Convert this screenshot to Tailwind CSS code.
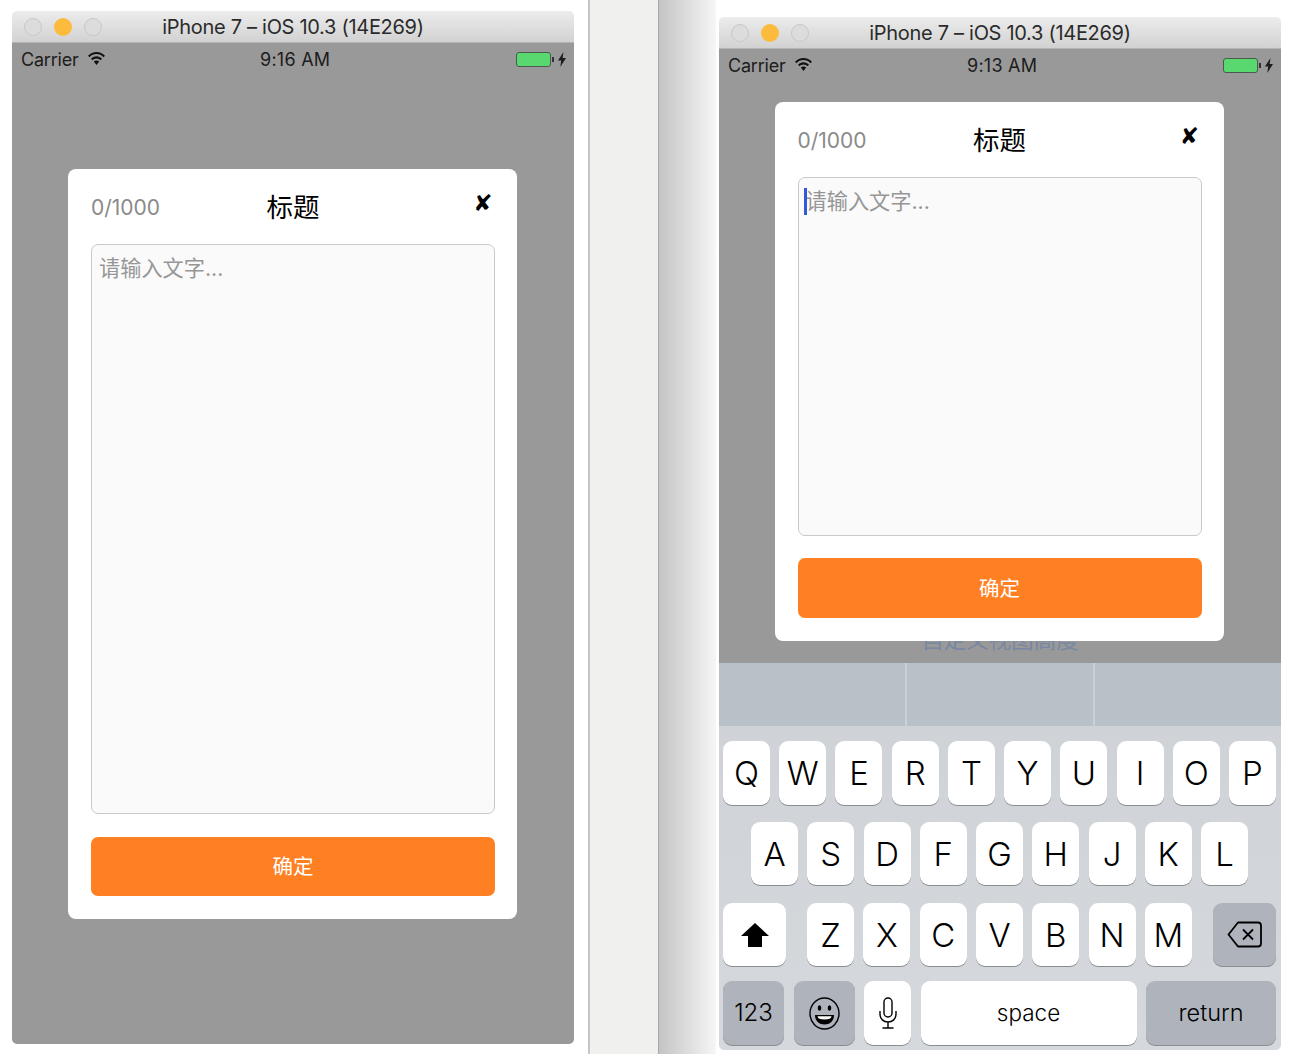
<!DOCTYPE html>
<html lang="zh">
<head>
<meta charset="utf-8">
<script src="https://cdn.jsdelivr.net/npm/@tailwindcss/browser@4"></script>
</head>
<body class="m-0 bg-white">
<div class="relative w-[1294px] h-[1054px] overflow-hidden bg-white flex font-['Inter','Noto_Sans_CJK_SC',sans-serif]">
  <div class="w-[588px] h-full"></div>
  <div class="w-[71px] h-full bg-[#f0f0ef] border-l-2 border-r border-l-[#c6c6c6] border-r-[#a8a8a8]"></div>
  <div class="w-[57px] h-full bg-gradient-to-r from-[#c4c4c4] to-[#f6f6f6]"></div>

  <!-- left simulator window -->
  <div class="absolute left-[12px] top-[11px] w-[562px] h-[1033px] flex flex-col rounded-[5px] overflow-hidden">
    <div class="relative h-[32px] shrink-0 bg-gradient-to-b from-[#ececec] to-[#d2d2d2] border-b border-[#b4b4b4] flex items-center justify-center">
      <div class="absolute left-[12px] top-[7px] flex gap-[12px]">
        <span class="w-[18px] h-[18px] rounded-full bg-[#dcdcdc] border border-[#c8c8c8]"></span>
        <span class="w-[18px] h-[18px] rounded-full bg-[#fdbb3d]"></span>
        <span class="w-[18px] h-[18px] rounded-full bg-[#dcdcdc] border border-[#c8c8c8]"></span>
      </div>
      <span class="text-[20px] text-[#2b2b2b] tracking-[-0.3px]">iPhone 7 – iOS 10.3 (14E269)</span>
    </div>
    <div class="flex-1 bg-[#999999] flex flex-col relative">
      <div class="relative h-[32px] shrink-0 flex items-center justify-between pl-[9px] pr-[8px] text-[18px] text-[#1c1c1c]">
        <div class="flex items-center gap-[9px]">
          <span class="tracking-[-0.2px]">Carrier</span>
          <svg class="w-[17px] h-[15px] -mt-[2px]" viewBox="0 0 17 15"><path d="M0 4.800C2.200 2.300 5.200 1 8.500 1s6.300 1.300 8.500 3.800l-1.500 1.500C13.700 4.200 11.200 3.100 8.500 3.100S3.300 4.200 1.500 6.300zM3 7.800C4.400 6.200 6.400 5.300 8.500 5.300s4.100.9 5.500 2.500l-1.500 1.500c-1-1.200-2.500-1.900-4-1.900s-3 .7-4 1.900zM5.800 10.600c.7-.8 1.700-1.200 2.700-1.200s2 .4 2.700 1.200l-2.700 3.300z" fill="#111"/></svg>
        </div>
        <span class="absolute left-[248px] tracking-[0.25px]">9:16 AM</span>
        <div class="flex items-center gap-[4px]">
          <div class="flex items-center gap-px">
            <div class="w-[35px] h-[15px] rounded-[3px] border border-[#4a5a4e] bg-[#58d86e]"></div>
            <div class="w-[2px] h-[5px] bg-[#333]"></div>
          </div>
          <svg class="w-[8px] h-[15px]" viewBox="0 0 8 15"><path d="M5.500 0 0 8.500h3.200L2.300 15 8 6H4.600z" fill="#1c1c1c"/></svg>
        </div>
      </div>
      <div class="absolute inset-0 flex items-center justify-center">
        <div class="w-[449px] h-[750px] bg-white rounded-[8px] flex flex-col pl-[23px] pr-[22px] pb-[23px] mt-[1px] -ml-px">
          <div class="relative h-[75px] shrink-0 flex items-center justify-center">
            <span class="absolute left-0 top-[25px] text-[21px] leading-[28px] text-[#8a8a8a]">0/1000</span>
            <span class="text-[26.500px] text-black leading-[34px]">标题</span>
            <span class="absolute right-[2.500px] top-[20px] text-[23px] leading-[28px] text-black font-['DejaVu_Sans']">✘</span>
          </div>
          <div class="flex-1 bg-[#fafafa] border border-[#c9c9c9] rounded-[7px] px-[7px] pt-[8px] text-[21.200px] leading-[30px] text-[#969696]">请输入文字...</div>
          <button class="mt-[23px] h-[59px] pt-[2px] shrink-0 bg-[#ff8022] rounded-[7px] text-white text-[20.500px]">确定</button>
        </div>
      </div>
    </div>
  </div>

  <!-- right simulator window -->
  <div class="absolute left-[719px] top-[17px] w-[562px] h-[1033px] flex flex-col rounded-[5px] overflow-hidden">
    <div class="relative h-[32px] shrink-0 bg-gradient-to-b from-[#ececec] to-[#d2d2d2] border-b border-[#b4b4b4] flex items-center justify-center">
      <div class="absolute left-[12px] top-[7px] flex gap-[12px]">
        <span class="w-[18px] h-[18px] rounded-full bg-[#dcdcdc] border border-[#c8c8c8]"></span>
        <span class="w-[18px] h-[18px] rounded-full bg-[#fdbb3d]"></span>
        <span class="w-[18px] h-[18px] rounded-full bg-[#dcdcdc] border border-[#c8c8c8]"></span>
      </div>
      <span class="text-[20px] text-[#2b2b2b] tracking-[-0.3px]">iPhone 7 – iOS 10.3 (14E269)</span>
    </div>
    <div class="relative h-[614px] shrink-0 bg-[#999999] flex flex-col items-center overflow-hidden">
      <div class="relative w-full h-[32px] shrink-0 flex items-center justify-between pl-[9px] pr-[8px] text-[18px] text-[#1c1c1c]">
        <div class="flex items-center gap-[9px]">
          <span class="tracking-[-0.2px]">Carrier</span>
          <svg class="w-[17px] h-[15px] -mt-[2px]" viewBox="0 0 17 15"><path d="M0 4.800C2.200 2.300 5.200 1 8.500 1s6.300 1.300 8.500 3.800l-1.500 1.500C13.700 4.200 11.200 3.100 8.500 3.100S3.300 4.200 1.500 6.300zM3 7.800C4.400 6.200 6.400 5.300 8.500 5.300s4.100.9 5.500 2.500l-1.500 1.500c-1-1.200-2.500-1.900-4-1.900s-3 .7-4 1.900zM5.800 10.600c.7-.8 1.700-1.200 2.700-1.200s2 .4 2.700 1.200l-2.700 3.300z" fill="#111"/></svg>
        </div>
        <span class="absolute left-[248px] tracking-[0.25px]">9:13 AM</span>
        <div class="flex items-center gap-[4px]">
          <div class="flex items-center gap-px">
            <div class="w-[35px] h-[15px] rounded-[3px] border border-[#4a5a4e] bg-[#58d86e]"></div>
            <div class="w-[2px] h-[5px] bg-[#333]"></div>
          </div>
          <svg class="w-[8px] h-[15px]" viewBox="0 0 8 15"><path d="M5.500 0 0 8.500h3.200L2.300 15 8 6H4.600z" fill="#1c1c1c"/></svg>
        </div>
      </div>
      <span class="absolute top-[576px] left-0 w-full text-center text-[22.500px] leading-[30px] text-[#7887a3]">自定义视图高度</span>
      <div class="relative mt-[21px] -ml-[2px] w-[449px] h-[539px] shrink-0 bg-white rounded-[8px] flex flex-col pl-[23px] pr-[22px] pb-[23px]">
        <div class="relative h-[75px] shrink-0 flex items-center justify-center">
          <span class="absolute left-0 top-[25px] text-[21px] leading-[28px] text-[#8a8a8a]">0/1000</span>
          <span class="text-[26.500px] text-black leading-[34px]">标题</span>
          <span class="absolute right-[2.500px] top-[20px] text-[23px] leading-[28px] text-black font-['DejaVu_Sans']">✘</span>
        </div>
        <div class="relative flex-1 bg-[#fafafa] border border-[#c9c9c9] rounded-[7px] px-[7px] pt-[8px] text-[21.200px] leading-[30px] text-[#969696]">请输入文字...<span class="absolute left-[5px] top-[10px] w-[3px] h-[27px] bg-[#3558d8]"></span></div>
        <button class="mt-[22px] h-[60px] pt-[2px] shrink-0 bg-[#ff8022] rounded-[7px] text-white text-[20.500px]">确定</button>
      </div>
    </div>
    <!-- keyboard -->
    <div class="flex-1 flex flex-col bg-gradient-to-b from-[#ced2d7] to-[#d5d8dc] text-black">
      <div class="h-[63px] shrink-0 flex bg-[#b9c1c8]">
        <div class="flex-1"></div><div class="w-[2px] bg-[#cbd0d5]"></div>
        <div class="flex-1"></div><div class="w-[2px] bg-[#cbd0d5]"></div>
        <div class="flex-1"></div>
      </div>
      <div class="flex gap-[9.200px] pl-[4px] pr-[5px] pt-[15px] text-[33px] font-light">
        <div class="flex-1 h-[64px] pt-px flex items-center justify-center bg-white rounded-[9px] shadow-[0_1px_0_#8a8d92]">Q</div>
        <div class="flex-1 h-[64px] pt-px flex items-center justify-center bg-white rounded-[9px] shadow-[0_1px_0_#8a8d92]">W</div>
        <div class="flex-1 h-[64px] pt-px flex items-center justify-center bg-white rounded-[9px] shadow-[0_1px_0_#8a8d92]">E</div>
        <div class="flex-1 h-[64px] pt-px flex items-center justify-center bg-white rounded-[9px] shadow-[0_1px_0_#8a8d92]">R</div>
        <div class="flex-1 h-[64px] pt-px flex items-center justify-center bg-white rounded-[9px] shadow-[0_1px_0_#8a8d92]">T</div>
        <div class="flex-1 h-[64px] pt-px flex items-center justify-center bg-white rounded-[9px] shadow-[0_1px_0_#8a8d92]">Y</div>
        <div class="flex-1 h-[64px] pt-px flex items-center justify-center bg-white rounded-[9px] shadow-[0_1px_0_#8a8d92]">U</div>
        <div class="flex-1 h-[64px] pt-px flex items-center justify-center bg-white rounded-[9px] shadow-[0_1px_0_#8a8d92]">I</div>
        <div class="flex-1 h-[64px] pt-px flex items-center justify-center bg-white rounded-[9px] shadow-[0_1px_0_#8a8d92]">O</div>
        <div class="flex-1 h-[64px] pt-px flex items-center justify-center bg-white rounded-[9px] shadow-[0_1px_0_#8a8d92]">P</div>
      </div>
      <div class="flex gap-[9.200px] pl-[32px] pr-[33px] pt-[17px] text-[33px] font-light">
        <div class="flex-1 h-[63px] pt-[2px] flex items-center justify-center bg-white rounded-[9px] shadow-[0_1px_0_#8a8d92]">A</div>
        <div class="flex-1 h-[63px] pt-[2px] flex items-center justify-center bg-white rounded-[9px] shadow-[0_1px_0_#8a8d92]">S</div>
        <div class="flex-1 h-[63px] pt-[2px] flex items-center justify-center bg-white rounded-[9px] shadow-[0_1px_0_#8a8d92]">D</div>
        <div class="flex-1 h-[63px] pt-[2px] flex items-center justify-center bg-white rounded-[9px] shadow-[0_1px_0_#8a8d92]">F</div>
        <div class="flex-1 h-[63px] pt-[2px] flex items-center justify-center bg-white rounded-[9px] shadow-[0_1px_0_#8a8d92]">G</div>
        <div class="flex-1 h-[63px] pt-[2px] flex items-center justify-center bg-white rounded-[9px] shadow-[0_1px_0_#8a8d92]">H</div>
        <div class="flex-1 h-[63px] pt-[2px] flex items-center justify-center bg-white rounded-[9px] shadow-[0_1px_0_#8a8d92]">J</div>
        <div class="flex-1 h-[63px] pt-[2px] flex items-center justify-center bg-white rounded-[9px] shadow-[0_1px_0_#8a8d92]">K</div>
        <div class="flex-1 h-[63px] pt-[2px] flex items-center justify-center bg-white rounded-[9px] shadow-[0_1px_0_#8a8d92]">L</div>
      </div>
      <div class="flex pl-[4px] pr-[5px] pt-[18px] text-[33px] font-light">
        <div class="w-[63px] h-[63px] flex items-center justify-center bg-white rounded-[9px] shadow-[0_1px_0_#8a8d92]">
          <svg class="w-[28px] h-[24px]" viewBox="0 0 28 24"><path d="M14 0 28 13h-7v11H7V13H0z" fill="#000"/></svg>
        </div>
        <div class="flex flex-1 gap-[9.200px] ml-[21px] mr-[21px]">
          <div class="flex-1 h-[63px] pt-[2px] flex items-center justify-center bg-white rounded-[9px] shadow-[0_1px_0_#8a8d92]">Z</div>
          <div class="flex-1 h-[63px] pt-[2px] flex items-center justify-center bg-white rounded-[9px] shadow-[0_1px_0_#8a8d92]">X</div>
          <div class="flex-1 h-[63px] pt-[2px] flex items-center justify-center bg-white rounded-[9px] shadow-[0_1px_0_#8a8d92]">C</div>
          <div class="flex-1 h-[63px] pt-[2px] flex items-center justify-center bg-white rounded-[9px] shadow-[0_1px_0_#8a8d92]">V</div>
          <div class="flex-1 h-[63px] pt-[2px] flex items-center justify-center bg-white rounded-[9px] shadow-[0_1px_0_#8a8d92]">B</div>
          <div class="flex-1 h-[63px] pt-[2px] flex items-center justify-center bg-white rounded-[9px] shadow-[0_1px_0_#8a8d92]">N</div>
          <div class="flex-1 h-[63px] pt-[2px] flex items-center justify-center bg-white rounded-[9px] shadow-[0_1px_0_#8a8d92]">M</div>
        </div>
        <div class="w-[63px] h-[63px] flex items-center justify-center bg-[#aeb3bc] rounded-[9px] shadow-[0_1px_0_#8a8d92]">
          <svg class="w-[35px] h-[27px]" viewBox="0 0 35 27" fill="none" stroke="#000" stroke-width="1.800"><path d="M11 1.500h20a3 3 0 0 1 3 3v18a3 3 0 0 1-3 3H11L1.500 13.500z" stroke-linejoin="round"/><path d="M16 8.500l10 10M26 8.500l-10 10"/></svg>
        </div>
      </div>
      <div class="flex gap-[9.500px] pl-[4px] pr-[5px] pt-[15px]">
        <div class="w-[61px] h-[64px] flex items-center justify-center bg-[#aeb3bc] rounded-[9px] shadow-[0_1px_0_#8a8d92] text-[24px] font-light">123</div>
        <div class="w-[61px] h-[64px] flex items-center justify-center bg-[#aeb3bc] rounded-[9px] shadow-[0_1px_0_#8a8d92]">
          <svg class="w-[31px] h-[33px]" viewBox="0 0 31 33" fill="none" stroke="#000" stroke-width="1.400"><ellipse cx="15.500" cy="16.500" rx="14.500" ry="15.500"/><ellipse cx="10.500" cy="11" rx="1.800" ry="2.800" fill="#000" stroke="none"/><ellipse cx="20.500" cy="11" rx="1.800" ry="2.800" fill="#000" stroke="none"/><path d="M6 18h19c0 6-4 9.500-9.500 9.500S6 24 6 18z" fill="#000" stroke="none"/><path d="M8.500 19.300h14c-.2 2.200-2.500 3.200-7 3.200s-6.800-1-7-3.200z" fill="#fff" stroke="none"/></svg>
        </div>
        <div class="w-[47px] h-[64px] flex items-center justify-center bg-white rounded-[9px] shadow-[0_1px_0_#8a8d92]">
          <svg class="w-[18px] h-[32px]" viewBox="0 0 18 32" fill="none" stroke="#000" stroke-width="1.400"><rect x="5" y="1" width="8" height="19" rx="4"/><path d="M1 14v3c0 5 3.500 8 8 8s8-3 8-8v-3M9 25v6M3.500 31h11"/></svg>
        </div>
        <div class="w-[216px] h-[64px] flex items-center justify-center bg-white rounded-[9px] shadow-[0_1px_0_#8a8d92] text-[22.500px] font-light">space</div>
        <div class="flex-1 h-[64px] flex items-center justify-center bg-[#aeb3bc] rounded-[9px] shadow-[0_1px_0_#8a8d92] text-[23.500px] font-light">return</div>
      </div>
    </div>
  </div>
</div>
</body>
</html>
